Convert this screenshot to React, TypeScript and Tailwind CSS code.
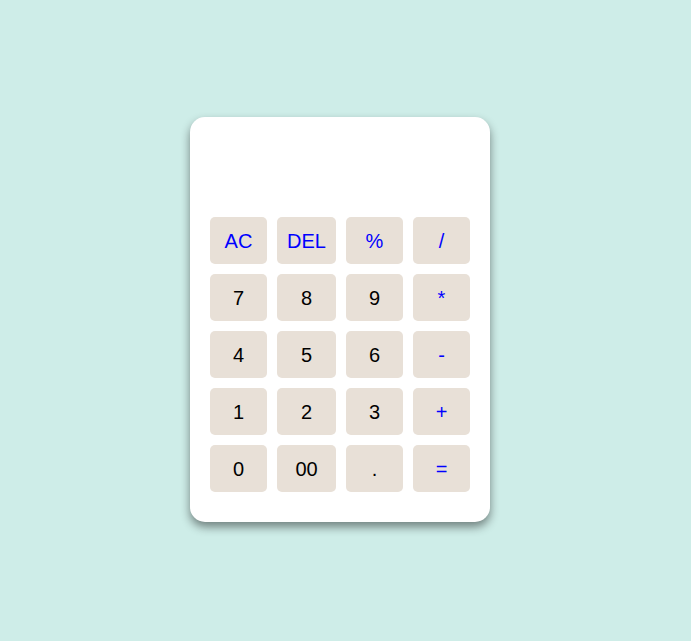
const keys: { label: string; op?: boolean }[] = [
  { label: "AC", op: true },
  { label: "DEL", op: true },
  { label: "%", op: true },
  { label: "/", op: true },
  { label: "7" },
  { label: "8" },
  { label: "9" },
  { label: "*", op: true },
  { label: "4" },
  { label: "5" },
  { label: "6" },
  { label: "-", op: true },
  { label: "1" },
  { label: "2" },
  { label: "3" },
  { label: "+", op: true },
  { label: "0" },
  { label: "00" },
  { label: "." },
  { label: "=", op: true },
];

export default function App() {
  return (
    <main
      className="min-h-screen bg-[#ceede8] flex items-center justify-center pr-[11px] pb-[2px]"
      style={{ fontFamily: '"Liberation Sans", Arial, sans-serif' }}
    >
      <div className="w-[300px] bg-white rounded-[15px] px-[20px] pt-[20px] pb-[30px] shadow-[0_5px_10px_rgba(0,0,0,0.45)]">
        {/* display */}
        <div className="h-[70px] mb-[10px]" />
        <div className="grid grid-cols-[57px_59px_57px_57px] gap-[10px]">
          {keys.map((k) => (
            <button
              key={k.label}
              className={
                "h-[47px] rounded-[5px] bg-[#e8e0d7] text-[20px] flex items-center justify-center " +
                (k.op ? "text-[#0000ff]" : "text-black")
              }
            >
              {k.label}
            </button>
          ))}
        </div>
      </div>
    </main>
  );
}
